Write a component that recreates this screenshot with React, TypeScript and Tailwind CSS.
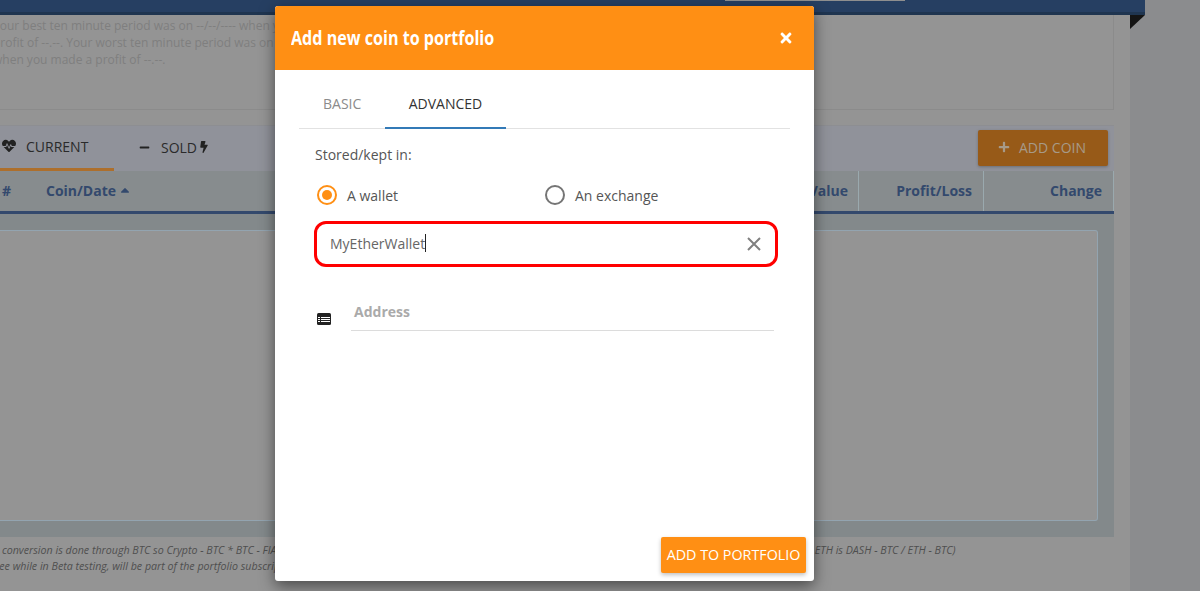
import React from "react";
import { FaHeartbeat, FaMinus, FaBolt, FaPlus, FaTimes, FaCaretUp } from "react-icons/fa";

function Background() {
  return (
    <div className="absolute inset-0 flex flex-col bg-[#8b8c8e] text-[#333]">
      <div className="relative h-[15px] w-[1145px] shrink-0 border-b-[3px] border-[#1f3550] bg-[#263f62]">
        <div className="ml-[725px] h-[1px] w-[180px] bg-[#8f8f8f]" />
      </div>
      <div className="w-[1130px] flex-1 overflow-hidden bg-[#949494] pr-[16px]">
        <div className="h-[95px] border-r border-b border-[#8b8b8b] text-[12px] leading-[17px] text-[#7f7f7f]">
          <div className="-ml-[7px] pt-[2px] whitespace-nowrap">
            <p>Your best ten minute period was on --/--/---- when you made a</p>
            <p>profit of --.--. Your worst ten minute period was on --/--/----</p>
            <p>when you made a profit of --.--.</p>
          </div>
        </div>
        <div className="mt-[15px] border-t border-[#8d8e92] bg-[#90929a]">
          <div className="flex h-[45px] items-start justify-between pr-[6px]">
            <div className="flex text-[14px] text-[#2a2a2a]">
              <div className="flex h-[45px] w-[114px] items-center gap-[10px] border-b-[3px] border-[#ad6f2c] pb-[2px] pl-[2px]">
                <FaHeartbeat className="text-[14px] text-[#222]" />
                <span>CURRENT</span>
              </div>
              <div className="flex h-[45px] items-center pb-[3px] pl-[25px]">
                <FaMinus className="mr-[11px] text-[11px] text-[#222]" />
                <span>SOLD</span>
                <FaBolt className="ml-[1px] text-[12px] text-[#222]" />
              </div>
            </div>
            <div className="mt-[4px] flex h-[36px] w-[130px] items-center justify-center gap-[9px] rounded-[2px] bg-[#975a18] pr-[2px] pb-[2px] text-[14px] text-[#a79a88] shadow-[0_1px_3px_rgba(0,0,0,0.25)]">
              <FaPlus className="text-[12px]" />
              <span>ADD COIN</span>
            </div>
          </div>
          <div className="flex h-[43px] items-stretch border-b-[3px] border-[#33496d] bg-[#878c8e] text-[14px] font-bold text-[#33496d]">
            <div className="flex w-[132px] items-center pb-[2px] pl-[2px]">
              <span className="w-[44px] shrink-0">#</span>
              <span className="whitespace-nowrap">Coin/Date</span>
              <FaCaretUp className="ml-[2px] shrink-0 text-[14px]" />
            </div>
            <div className="flex-1" />
            <div className="flex w-[44px] items-center justify-end border-r border-[#9aa9ae] pr-[10px] pb-[2px]">Value</div>
            <div className="flex w-[125px] items-center justify-end border-r border-[#9aa9ae] pr-[11px] pb-[2px]">Profit/Loss</div>
            <div className="flex w-[130px] items-center justify-end border-r border-[#9aa9ae] pr-[11px] pb-[2px]">Change</div>
          </div>
          <div className="h-[323px] bg-[#83898b] pt-[16px] pr-[16px] pb-[16px]">
            <div className="h-full rounded-r-[3px] border border-l-0 border-[#93a4b0] bg-[#949494]" />
          </div>
        </div>
        <div className="mt-[5px] text-[10.67px] leading-[16px] whitespace-nowrap text-[#4f4f4f] italic">
          <p className="flex">
            <span className="-ml-[40px]">Note: All conversion is done through BTC so Crypto - BTC * BTC - FIAT</span>
            <span className="ml-[533px]">ETH is DASH - BTC / ETH - BTC)</span>
          </p>
          <p className="-ml-[10px]">Free while in Beta testing, will be part of the portfolio subscription</p>
        </div>
      </div>
      <div className="absolute top-[15px] left-[1130px] h-0 w-0 border-t-[14px] border-r-[15px] border-t-[#141414] border-r-transparent" />
    </div>
  );
}

function Modal() {
  return (
    <div className="absolute top-[6px] left-[275px] flex h-[575px] w-[539px] flex-col rounded-[3px] bg-white shadow-[0_5px_15px_rgba(0,0,0,0.5)]">
      <div className="flex h-[64px] shrink-0 items-center justify-between rounded-t-[3px] bg-[#ff8f14] pr-[20px] pb-[1px] pl-[16px] text-white">
        <h1 className="origin-left scale-x-[0.805] text-[20px] font-bold whitespace-nowrap">Add new coin to portfolio</h1>
        <FaTimes className="text-[16px]" />
      </div>
      <div className="flex min-h-0 flex-1 flex-col px-[24px]">
        <div className="flex h-[59px] border-b border-[#e2e2e2] pt-[12px] text-[14px]">
          <div className="flex h-[47px] w-[86px] items-center pb-[4px] pl-[24px] text-[#8b8b8b]">BASIC</div>
          <div className="flex h-[47px] w-[121px] items-center justify-center border-b-2 border-[#337ab7] pb-[2px] text-[#333]">ADVANCED</div>
        </div>
        <div className="px-[16px] pt-[16px] text-[14px] text-[#555]">
          <p className="leading-[19px]">Stored/kept in:</p>
          <div className="mt-[20px] flex h-[22px] items-center">
            <div className="flex w-[230px] items-center">
              <span className="ml-[2px] flex h-[20px] w-[20px] items-center justify-center rounded-full border-2 border-[#ff8f14]">
                <span className="h-[10px] w-[10px] rounded-full bg-[#ff8f14]" />
              </span>
              <span className="ml-[10px]">A wallet</span>
            </div>
            <div className="flex items-center">
              <span className="h-[20px] w-[20px] rounded-full border-2 border-[#757575]" />
              <span className="ml-[10px]">An exchange</span>
            </div>
          </div>
          <div className="mt-[15px] -ml-[1px] flex h-[46px] w-[464px] items-center justify-between rounded-[12px] border-[3px] border-[#ff0000] pr-[14px] pl-[13px] text-[#666]">
            <span className="mb-[2px] flex items-center">MyEtherWallet<span className="h-[18px] w-px bg-[#222]" /></span>
            <svg width="14" height="14" viewBox="0 0 14 14" className="text-[#808080]">
              <path d="M1 1 L13 13 M13 1 L1 13" stroke="currentColor" strokeWidth="2" />
            </svg>
          </div>
          <div className="mt-[26px] flex items-end">
            <svg width="14" height="12" viewBox="0 0 14 12" className="mb-[6px] ml-[2px] shrink-0">
              <rect width="14" height="12" rx="1.5" fill="#222" />
              <path d="M1 4.5H3M4 4.5H13M1 6.5H3M4 6.5H13M1 8.5H3M4 8.5H13" stroke="#fff" strokeWidth="1" />
            </svg>
            <div className="ml-[20px] flex h-[38px] w-[424px] items-center border-b border-[#dcdcdc] pl-[3px] font-bold text-[#aaa]">Address</div>
          </div>
        </div>
        <div className="mt-auto mb-[8px] flex justify-end">
          <button className="-mr-[16px] h-[36px] w-[145px] rounded-[2px] bg-[#ff8f14] pb-[1px] text-center text-[14.3px] whitespace-nowrap text-white shadow-[0_2px_4px_rgba(0,0,0,0.25)]">ADD TO PORTFOLIO</button>
        </div>
      </div>
    </div>
  );
}

export default function App() {
  return (
    <div className="relative h-[591px] w-[1200px] overflow-hidden font-['Open_Sans',sans-serif]">
      <Background />
      <Modal />
    </div>
  );
}
